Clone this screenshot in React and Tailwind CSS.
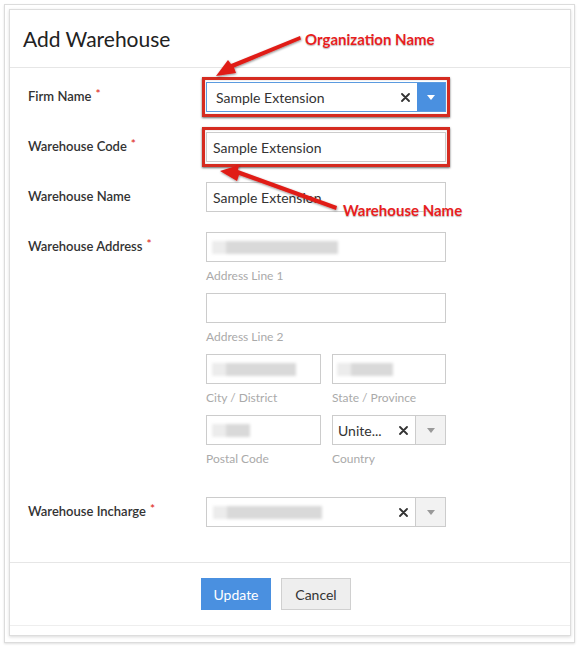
import React from "react";

const X = () => (
  <svg width="9" height="9" viewBox="0 0 9 9" className="shrink-0">
    <path d="M1 1 L8 8 M8 1 L1 8" stroke="#333" strokeWidth="1.8" strokeLinecap="round" />
  </svg>
);

const Caret = ({ color }) => (
  <svg width="8" height="5" viewBox="0 0 8 5">
    <path d="M0 0 L8 0 L4 5 Z" fill={color} />
  </svg>
);

const Blur = ({ w, dark }) => (
  <div className="flex items-center h-[14px] blur-[1.5px]">
    <div className="h-[13px] bg-[#ececec]" style={{ width: 14 }} />
    <div className="h-[13px] bg-[#d9d9d9]" style={{ width: w }} />
    {dark ? <div className="h-[13px] bg-[#e6e6e6]" style={{ width: 8 }} /> : null}
  </div>
);

const Label = ({ children, req }) => (
  <div className="w-[178px] h-[30px] flex items-center text-[13px] font-semibold text-[#333]">
    {children}
    {req ? <span className="text-[#e0342c] text-[12px] ml-[4px] -mt-[6px]">*</span> : null}
  </div>
);

const Helper = ({ children }) => (
  <div className="mt-[5px] mb-[8px] h-[18px] leading-[18px] text-[12px] text-[#aaa]">{children}</div>
);

const RedBox = () => (
  <span className="absolute -left-[4px] -right-[4px] -top-[5px] -bottom-[5px] border-[3px] border-[#d52b20] shadow-[0_1px_2px_rgba(0,0,0,0.6),inset_0_0_1px_rgba(0,0,0,0.5)] pointer-events-none" />
);

export default function App() {
  return (
    <div className="w-[579px] h-[646px] bg-white p-[4px] font-['Lato','Noto_Sans',sans-serif] relative overflow-hidden">
      <div className="h-[639px] border border-[#dcdcdc] shadow-[0_1px_2px_rgba(0,0,0,0.12)] pt-[4px] pl-[4px] pr-[3px]">
        <div className="h-[627px] border border-[#dddddd] shadow-[0_1px_3px_rgba(0,0,0,0.15)] bg-white flex flex-col">
          {/* header */}
          <div className="h-[58px] border-b border-[#e6e6e6] flex items-center pl-[13px] pt-[1px]">
            <h1 className="text-[21px] text-[#222] font-normal">Add Warehouse</h1>
          </div>

          {/* body */}
          <div className="pt-[14px] pl-[18px] flex flex-col gap-[20px] flex-1">
            {/* Firm name */}
            <div className="flex">
              <Label req>Firm Name</Label>
              <div className="relative w-[240px] h-[30px]">
                <div className="flex h-full border border-[#5b9be0] bg-white">
                  <div className="flex-1 flex items-center pl-[9px] text-[14px] text-[#333]">Sample Extension</div>
                  <div className="w-[24px] flex items-center justify-center"><X /></div>
                  <div className="w-[28px] bg-[#4a90e0] flex items-center justify-center"><Caret color="#fff" /></div>
                </div>
                <RedBox />
              </div>
            </div>

            {/* Code */}
            <div className="flex">
              <Label req>Warehouse Code</Label>
              <div className="relative w-[240px] h-[30px]">
                <div className="h-full border border-[#ccc] flex items-center pl-[6px] text-[14px] text-[#333]">Sample Extension</div>
                <RedBox />
              </div>
            </div>

            {/* Name */}
            <div className="flex">
              <Label>Warehouse Name</Label>
              <div className="w-[240px] h-[30px] border border-[#ccc] flex items-center pl-[6px] text-[14px] text-[#333]">Sample Extension</div>
            </div>

            {/* Address */}
            <div className="flex">
              <Label req>Warehouse Address</Label>
              <div className="w-[240px] flex flex-col">
                <div className="h-[30px] border border-[#ccc] flex items-center pl-[5px]"><Blur w={112} /></div>
                <Helper>Address Line 1</Helper>
                <div className="h-[30px] border border-[#ccc]" />
                <Helper>Address Line 2</Helper>
                <div className="flex gap-[11px]">
                  <div className="w-[115px]">
                    <div className="h-[30px] border border-[#ccc] flex items-center pl-[5px]"><Blur w={70} /></div>
                    <Helper>City / District</Helper>
                  </div>
                  <div className="w-[114px]">
                    <div className="h-[30px] border border-[#ccc] flex items-center pl-[4px]"><Blur w={42} /></div>
                    <Helper>State / Province</Helper>
                  </div>
                </div>
                <div className="flex gap-[11px]">
                  <div className="w-[115px]">
                    <div className="h-[30px] border border-[#ccc] flex items-center pl-[5px]"><Blur w={24} /></div>
                    <Helper>Postal Code</Helper>
                  </div>
                  <div className="w-[114px]">
                    <div className="h-[30px] border border-[#ccc] flex">
                      <div className="flex-1 flex items-center pl-[5px] text-[14px] text-[#333]">Unite...</div>
                      <div className="w-[24px] flex items-center justify-center"><X /></div>
                      <div className="w-[30px] border-l border-[#ccc] bg-[#f2f2f2] flex items-center justify-center"><Caret color="#999" /></div>
                    </div>
                    <Helper>Country</Helper>
                  </div>
                </div>
              </div>
            </div>

            {/* Incharge */}
            <div className="flex mt-[1px]">
              <Label req>Warehouse Incharge</Label>
              <div className="w-[240px] h-[30px] border border-[#ccc] flex">
                <div className="flex-1 flex items-center pl-[6px]"><Blur w={95} /></div>
                <div className="w-[24px] flex items-center justify-center"><X /></div>
                <div className="w-[30px] border-l border-[#ccc] bg-[#f2f2f2] flex items-center justify-center"><Caret color="#999" /></div>
              </div>
            </div>
          </div>

          {/* footer */}
          <div className="border-t border-[#e6e6e6] pt-[15px] pb-[15px] pl-[191px] flex gap-[10px]">
            <button className="w-[70px] h-[32px] bg-[#4a90e0] text-white text-[14px]">Update</button>
            <button className="w-[70px] h-[32px] bg-[#eeeeee] border border-[#d0d0d0] text-[#333] text-[14px]">Cancel</button>
          </div>
          <div className="border-t border-[#eeeeee] h-[10px]" />
        </div>
      </div>

      {/* annotations */}
      <svg className="absolute left-0 top-0 pointer-events-none" width="579" height="646" viewBox="0 0 579 646">
        <defs>
          <filter id="sh" x="-20%" y="-20%" width="140%" height="140%">
            <feDropShadow dx="0.5" dy="1" stdDeviation="0.8" floodColor="#000" floodOpacity="0.45" />
          </filter>
        </defs>
        <g fill="#e01b17" filter="url(#sh)">
          <polygon points="300,36 301,39.5 234,67.5 236,73 216,76 228,60 231,64" />
          <polygon points="337,206 336,210 239,175 237,181 220,171 239,165 238,170" />
        </g>
      </svg>
      <div className="absolute left-[305px] top-[28px] text-[15px] font-bold text-[#e81d1d] font-['Lato',sans-serif] [text-shadow:0_0_2px_#fff,0_1px_1px_rgba(0,0,0,0.35)]">Organization Name</div>
      <div className="absolute left-[343px] top-[199px] text-[15px] font-bold text-[#e81d1d] font-['Lato',sans-serif] [text-shadow:0_0_2px_#fff,0_1px_1px_rgba(0,0,0,0.35)]">Warehouse Name</div>
    </div>
  );
}
